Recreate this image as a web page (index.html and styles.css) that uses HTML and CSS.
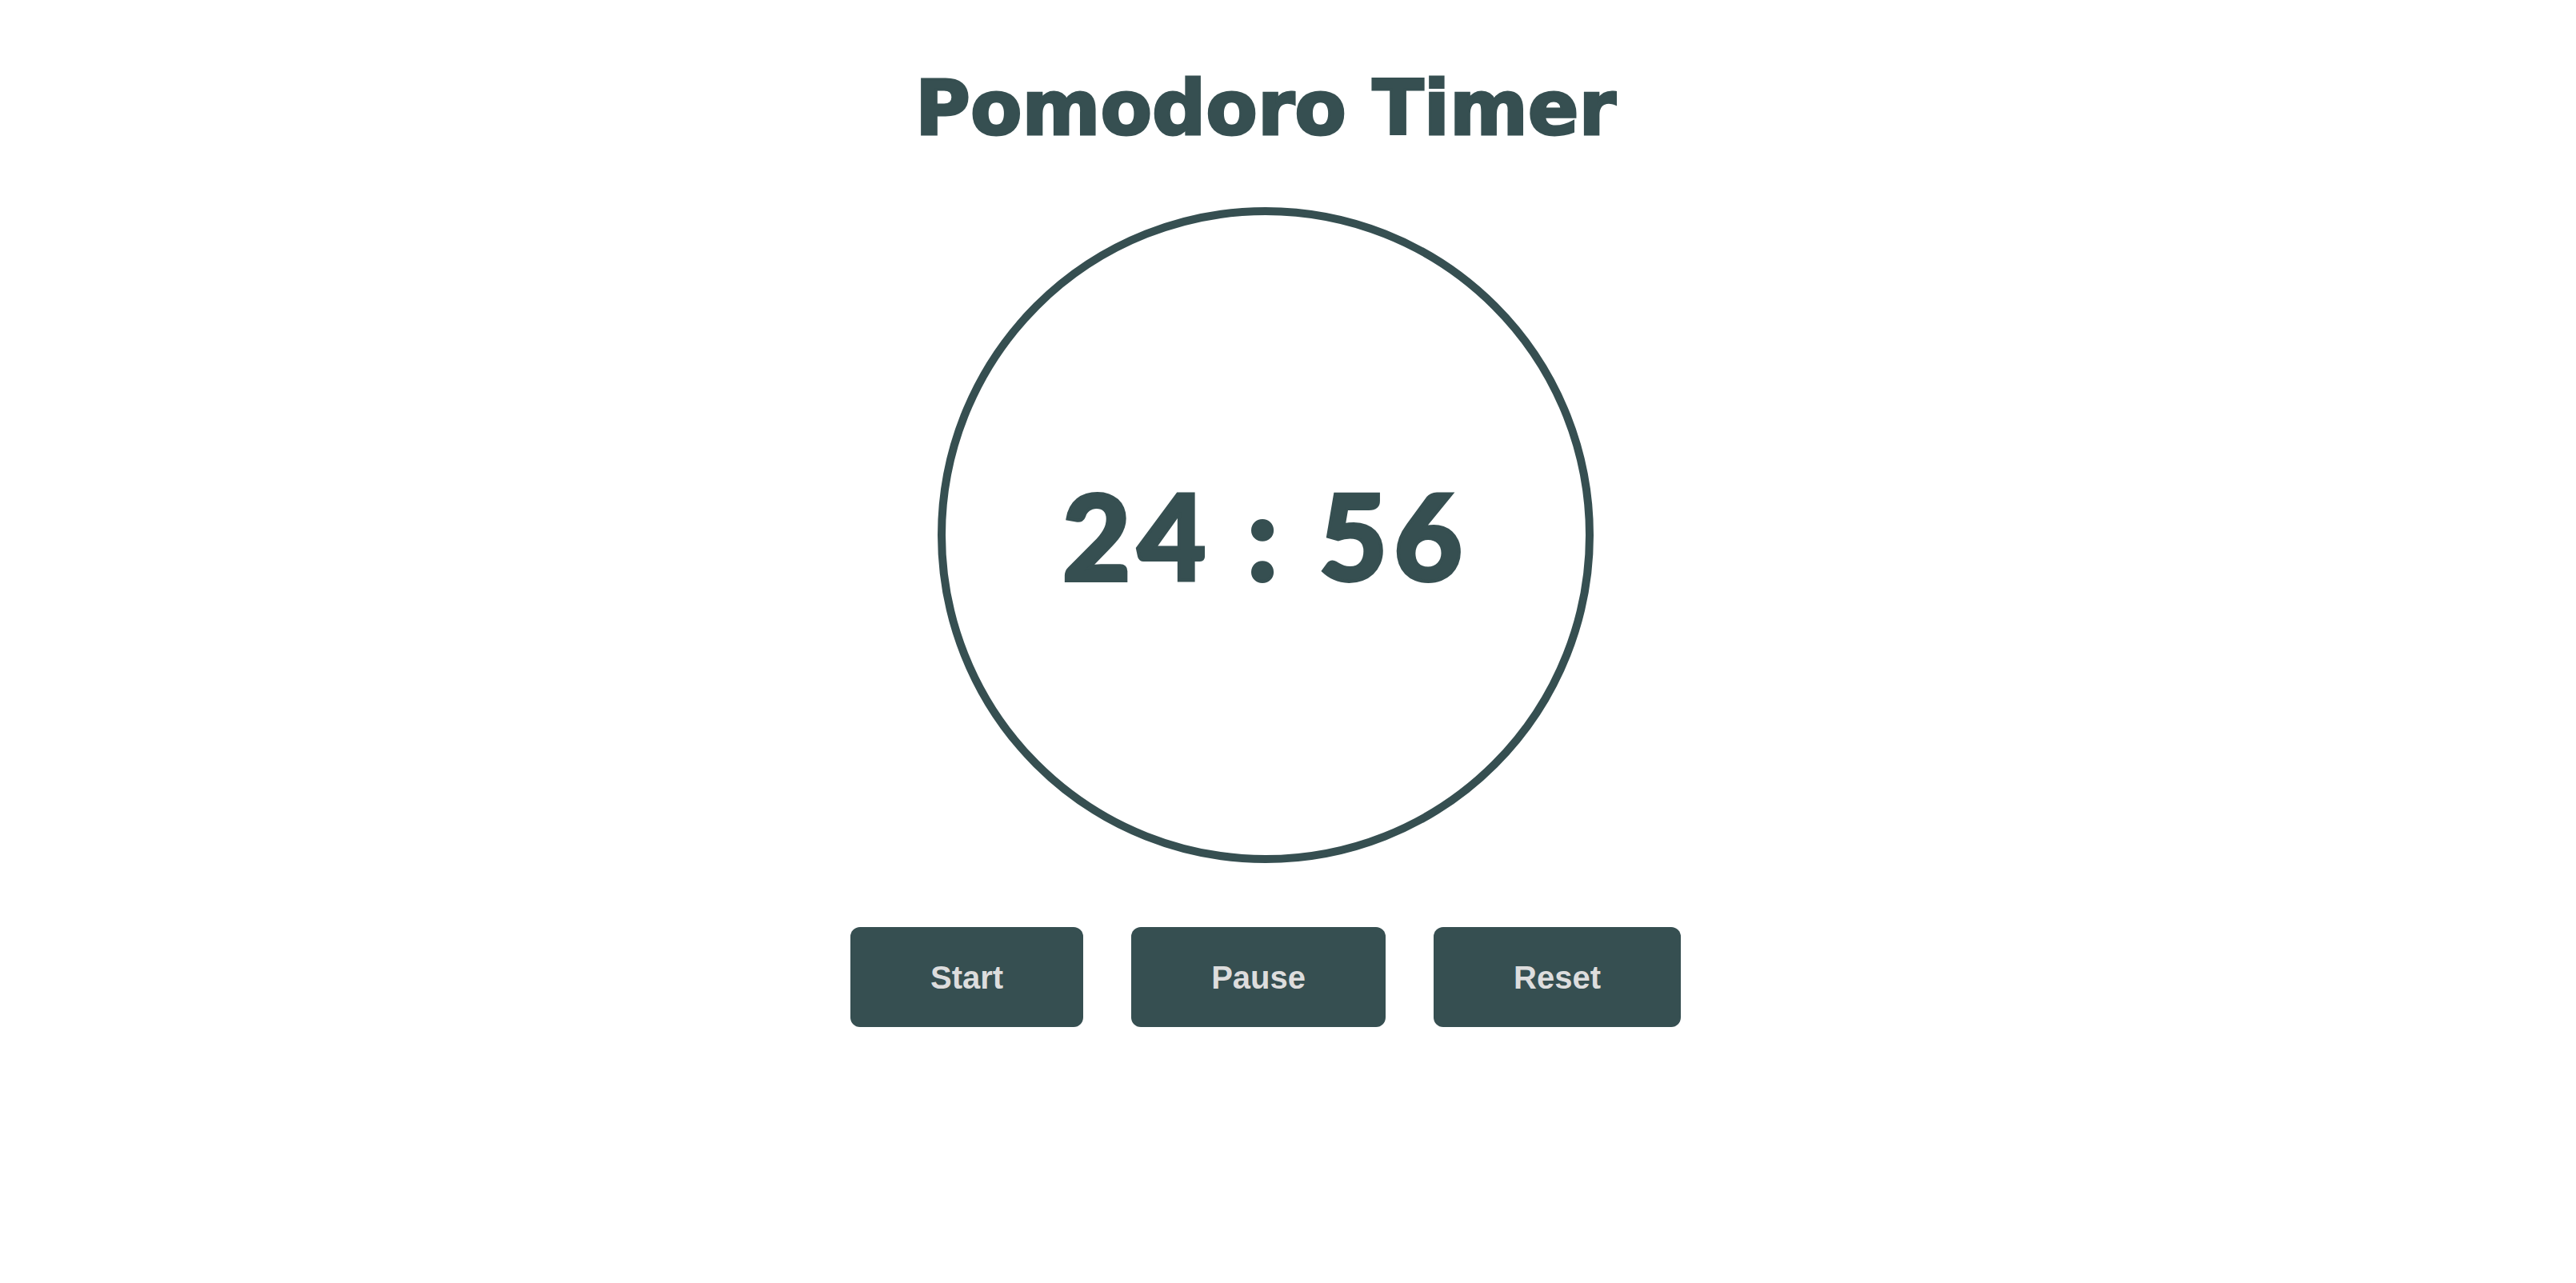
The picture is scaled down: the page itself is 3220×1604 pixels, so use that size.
FILE: index.html
```html
<!DOCTYPE html>
<html lang="en">
<head>
<meta charset="utf-8">
<title>Pomodoro Timer</title>
<link rel="stylesheet" href="styles.css">
</head>
<body>
<main class="app">
  <h1 class="title">Pomodoro Timer</h1>
  <div class="dial">
    <span class="time">24 : 56</span>
  </div>
  <div class="controls">
    <button class="btn" type="button">Start</button>
    <button class="btn" type="button">Pause</button>
    <button class="btn" type="button">Reset</button>
  </div>
</main>
</body>
</html>
```

FILE: styles.css
```css
html, body {
  margin: 0;
  padding: 0;
  background: #ffffff;
}

.app {
  display: flex;
  flex-direction: column;
  align-items: center;
  padding: 80px 56px 0 0;
  color: #364f51;
}

.title {
  margin: 0;
  font-family: "DejaVu Sans", Verdana, sans-serif;
  font-weight: bold;
  font-size: 94px;
  line-height: 112px;
  -webkit-text-stroke: 3px #364f51;
}

.dial {
  margin-top: 67px;
  width: 800px;
  height: 800px;
  border: 10px solid #364f51;
  border-radius: 50%;
  display: flex;
  align-items: center;
  justify-content: center;
}

.time {
  font-family: Lato, sans-serif;
  font-weight: 900;
  font-size: 148px;
  line-height: 1;
  letter-spacing: 8px;
  -webkit-text-stroke: 4px #364f51;
}

.controls {
  margin-top: 80px;
  display: flex;
  gap: 60px;
}

.btn {
  font-family: "Liberation Sans", Arial, sans-serif;
  font-weight: bold;
  font-size: 40px;
  line-height: 46px;
  padding: 40px 100px 39px;
  border: none;
  border-radius: 12px;
  background: #364f51;
  color: #dddddd;
}
```
